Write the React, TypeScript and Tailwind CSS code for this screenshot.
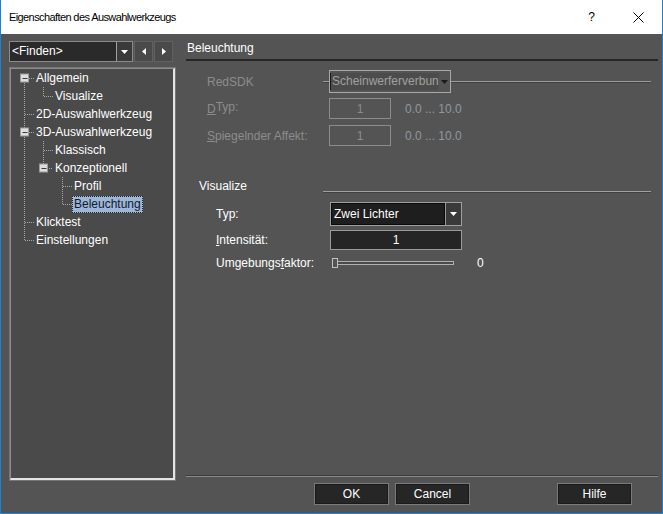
import React from "react";

const font = { fontFamily: '"Liberation Sans", Arial, sans-serif' };

type Node = { label: string; level: number; selected?: boolean };

const rows: Node[] = [
  { label: "Allgemein", level: 0 },
  { label: "Visualize", level: 1 },
  { label: "2D-Auswahlwerkzeug", level: 0 },
  { label: "3D-Auswahlwerkzeug", level: 0 },
  { label: "Klassisch", level: 1 },
  { label: "Konzeptionell", level: 1 },
  { label: "Profil", level: 2 },
  { label: "Beleuchtung", level: 2, selected: true },
  { label: "Klicktest", level: 0 },
  { label: "Einstellungen", level: 0 },
];

const cy = (i: number) => 9 + 18 * i;

const Expander = ({ cx, y }: { cx: number; y: number }) => (
  <g>
    <rect x={cx - 4} y={y - 4} width={8} height={8} fill="#dedede" stroke="#9c9c9c" />
    <line x1={cx - 2} y1={y + 0.5} x2={cx + 3} y2={y + 0.5} stroke="#2c3e5c" />
  </g>
);

const TreeLines = () => {
  const d = { stroke: "#a8a8a8", strokeDasharray: "1 1", strokeWidth: 1 };
  return (
    <svg className="absolute left-0 top-0 pointer-events-none" width="160" height="260">
      {/* root */}
      <line x1={13.5} y1={cy(0) + 5} x2={13.5} y2={cy(9) + 0.5} {...d} />
      <line x1={18} y1={cy(0) + 0.5} x2={23} y2={cy(0) + 0.5} {...d} />
      <line x1={14} y1={cy(2) + 0.5} x2={23} y2={cy(2) + 0.5} {...d} />
      <line x1={18} y1={cy(3) + 0.5} x2={23} y2={cy(3) + 0.5} {...d} />
      <line x1={14} y1={cy(8) + 0.5} x2={23} y2={cy(8) + 0.5} {...d} />
      <line x1={14} y1={cy(9) + 0.5} x2={23} y2={cy(9) + 0.5} {...d} />
      {/* Allgemein children */}
      <line x1={32.5} y1={cy(0) + 9} x2={32.5} y2={cy(1) + 0.5} {...d} />
      <line x1={33} y1={cy(1) + 0.5} x2={42} y2={cy(1) + 0.5} {...d} />
      {/* 3D children */}
      <line x1={32.5} y1={cy(3) + 9} x2={32.5} y2={cy(5) - 4} {...d} />
      <line x1={33} y1={cy(4) + 0.5} x2={42} y2={cy(4) + 0.5} {...d} />
      <line x1={38} y1={cy(5) + 0.5} x2={42} y2={cy(5) + 0.5} {...d} />
      {/* Konzeptionell children */}
      <line x1={51.5} y1={cy(5) + 9} x2={51.5} y2={cy(7) + 0.5} {...d} />
      <line x1={52} y1={cy(6) + 0.5} x2={61} y2={cy(6) + 0.5} {...d} />
      <line x1={52} y1={cy(7) + 0.5} x2={61} y2={cy(7) + 0.5} {...d} />
      <Expander cx={13.5} y={cy(0)} />
      <Expander cx={13.5} y={cy(3)} />
      <Expander cx={32.5} y={cy(5)} />
    </svg>
  );
};

const Caret = ({ color = "#ffffff" }: { color?: string }) => (
  <svg width="7" height="4" viewBox="0 0 7 4">
    <path d="M0 0h7L3.5 4z" fill={color} />
  </svg>
);

const Btn = ({ children, className = "" }: { children: React.ReactNode; className?: string }) => (
  <div
    className={`flex h-[22px] w-[75px] items-center justify-center border border-[#7a7a7a] bg-[#262626] text-[12px] text-white shadow-[inset_0_0_0_1px_#1a1a1a] ${className}`}
  >
    {children}
  </div>
);

export default function App() {
  return (
    <div
      style={font}
      className="flex h-[514px] w-[663px] flex-col border-x border-b border-[#1883d7] bg-[#545454] text-[12px]"
    >
      {/* title bar */}
      <div className="flex h-[34px] items-center bg-white pl-[8px] text-black">
        <span className="text-[11px] tracking-[-0.6px]">Eigenschaften des Auswahlwerkzeugs</span>
        <span className="ml-auto mr-[38px] text-[12px]">?</span>
        <svg width="11" height="11" viewBox="0 0 11 11" className="mr-[18px]">
          <path d="M0.5 0.5l10 10M10.5 0.5l-10 10" stroke="#000" strokeWidth="1" />
        </svg>
      </div>

      <div className="flex flex-1 pl-[8px] pt-[7px]">
        {/* left column */}
        <div className="flex w-[167px] flex-col">
          <div className="flex h-[21px]">
            <div className="flex w-[124px] border border-[#8a8a8a] bg-[#2a2a2a]">
              <span className="flex-1 pl-[2px] leading-[19px] text-white">&lt;Finden&gt;</span>
              <div className="flex w-[16px] items-center justify-center border-l border-[#a0a0a0] bg-[#3a3a3a]">
                <Caret />
              </div>
            </div>
            <div className="ml-[1px] flex w-[19px] items-center justify-center border border-[#616161] bg-[#4a4a4a]">
              <svg width="4" height="7" viewBox="0 0 4 7"><path d="M4 0v7L0 3.5z" fill="#fff" /></svg>
            </div>
            <div className="ml-[1px] flex w-[19px] items-center justify-center border border-[#616161] bg-[#4a4a4a]">
              <svg width="4" height="7" viewBox="0 0 4 7"><path d="M0 0v7l4-3.5z" fill="#fff" /></svg>
            </div>
          </div>
          <div className="mt-[5px] h-[414px] border border-[#767676] bg-[#5a5a5a]">
            <div className="relative h-full border-l border-t border-[#8c8c8c] border-b-2 border-r-2 border-b-[#e4e4e4] border-r-[#e4e4e4] bg-[#4a4a4a]">
              <TreeLines />
              {rows.map((r) => (
                <div
                  key={r.label}
                  className="flex h-[18px] items-center"
                  style={{ paddingLeft: 23 + r.level * 19 }}
                >
                  <span
                    className={
                      r.selected
                        ? "border border-dotted border-[#202020] bg-[#9fb7d6] px-[1px] leading-[15px] text-[#0c1a30]"
                        : "border border-transparent px-[1px] leading-[15px] text-white"
                    }
                  >
                    {r.label}
                  </span>
                </div>
              ))}
            </div>
          </div>
        </div>

        {/* right column */}
        <div className="ml-[10px] flex w-[472px] flex-col pb-[8px]">
          <div className="pl-[1px] leading-[15px] text-white">Beleuchtung</div>
          <div className="mt-[3px] h-[2px] bg-[#262626]" />

          {/* RedSDK */}
          <div className="mt-[9px] flex h-[23px] items-center text-[#8c8c8c]">
            <div className="w-[137px] pl-[21px]">RedSDK</div>
            <div className="h-[2px] w-[6px] border-t border-[#9c9c9c] bg-[#404040]" />
            <div className="flex h-[23px] w-[122px] border border-[#a8a8a8]">
              <div className="my-[2px] flex-1 border-l border-[#1a1a1a] bg-[#4c4c4c] pl-[1px] leading-[17px] text-[#a0a0a0]">
                Scheinwerferverbun
              </div>
              <div className="flex w-[12px] items-center justify-center">
                <Caret color="#1a1a1a" />
              </div>
            </div>
            <div className="mr-[7px] h-[2px] flex-1 border-t border-[#9c9c9c] bg-[#404040]" />
          </div>

          {/* DTyp */}
          <div className="mt-[5px] flex h-[21px] items-center text-[#8c8c8c]">
            <div className="w-[143px] pl-[21px]">
              <span className="underline">D</span>
              <span className="relative -top-[2px]">Typ:</span>
            </div>
            <div className="flex h-[21px] w-[62px] items-center justify-center border border-[#8c8c8c]">1</div>
            <span className="ml-[14px] text-[#9098a0]">0.0 ... 10.0</span>
          </div>

          {/* Spiegelnder Affekt */}
          <div className="mt-[6px] flex h-[21px] items-center text-[#8c8c8c]">
            <div className="w-[143px] pl-[21px]">
              <span className="underline">S</span>piegelnder Affekt:
            </div>
            <div className="flex h-[21px] w-[62px] items-center justify-center border border-[#8c8c8c]">1</div>
            <span className="ml-[14px] text-[#9098a0]">0.0 ... 10.0</span>
          </div>

          {/* Visualize group */}
          <div className="mt-[32px] flex h-[16px]">
            <div className="w-[137px] pl-[13px] leading-[16px] text-white">Visualize</div>
            <div className="mr-[7px] mt-[13px] h-[2px] flex-1 border-t border-[#a0a0a0] bg-[#404040]" />
          </div>

          <div className="mt-[8px] flex h-[24px] items-center text-white">
            <div className="w-[144px] pl-[30px]">Typ:</div>
            <div className="flex h-[24px] w-[132px] border border-[#a0a0a0] bg-[#1e1e1e]">
              <div className="flex-1 border border-[#0a0a0a] pl-[2px] leading-[20px]">Zwei Lichter</div>
              <div className="flex w-[16px] items-center justify-center border-l border-[#9a9a9a] bg-[#3a3a3a]">
                <Caret />
              </div>
            </div>
          </div>

          <div className="mt-[4px] flex h-[20px] items-center text-white">
            <div className="w-[144px] pl-[30px]">
              <span className="underline">I</span>ntensität:
            </div>
            <div className="flex h-[20px] w-[132px] items-center justify-center border border-[#9a9a9a] bg-[#252525]">
              1
            </div>
          </div>

          <div className="mt-[4px] flex h-[18px] items-center text-white">
            <div className="w-[144px] pl-[30px]">
              Umgebungs<span className="underline">f</span>aktor:
            </div>
            <div className="relative h-[11px] w-[124px]">
              <div className="ml-[4px] mt-[3px] h-[4px] w-[120px] border border-[#b0b0b0] bg-[#4a4a4a]" />
              <div className="absolute left-[2px] top-0 h-[10px] w-[6px] border border-[#c0c0c0] bg-[#545454]" />
            </div>
            <span className="ml-[23px]">0</span>
          </div>

          <div className="mt-auto h-[2px] border-t border-[#3c3c3c] border-b border-b-[#8a8a8a]" />
          <div className="mt-[6px] flex">
            <Btn className="ml-[128px]">OK</Btn>
            <Btn className="ml-[6px]">Cancel</Btn>
            <Btn className="ml-[87px]">Hilfe</Btn>
          </div>
        </div>
      </div>
    </div>
  );
}
